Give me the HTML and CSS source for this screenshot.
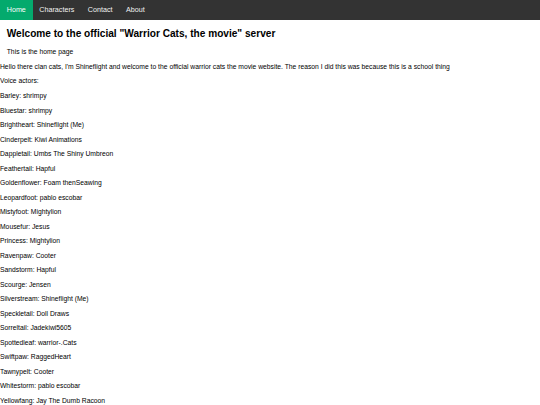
FILE: index.html
```html
<!DOCTYPE html>
<html>
<head>
<meta charset="utf-8">
<title>Warrior Cats</title>
<link rel="stylesheet" href="styles.css">
</head>
<body>
<nav class="topnav">
  <a class="active" href="#home">Home</a>
  <a href="#characters">Characters</a>
  <a href="#contact">Contact</a>
  <a href="#about">About</a>
</nav>
<div class="intro">
  <h2>Welcome to the official "Warrior Cats, the movie" server</h2>
  <p>This is the home page</p>
</div>
<p>Hello there clan cats, I'm Shineflight and welcome to the official warrior cats the movie website. The reason I did this was because this is a school thing</p>
<p>Voice actors:</p>
<p>Barley: shrimpy</p>
<p>Bluestar: shrimpy</p>
<p>Brightheart: Shineflight (Me)</p>
<p>Cinderpelt: Kiwi Animations</p>
<p>Dappletail: Umbs The Shiny Umbreon</p>
<p>Feathertail: Hapful</p>
<p>Goldenflower: Foam thenSeawing</p>
<p>Leopardfoot: pablo escobar</p>
<p>Mistyfoot: Mightylion</p>
<p>Mousefur: Jesus</p>
<p>Princess: Mightylion</p>
<p>Ravenpaw: Cooter</p>
<p>Sandstorm: Hapful</p>
<p>Scourge: Jensen</p>
<p>Silverstream: Shineflight (Me)</p>
<p>Speckletail: Doll Draws</p>
<p>Sorreltail: Jadekiwi5605</p>
<p>Spottedleaf: warrior-.Cats</p>
<p>Swiftpaw: RaggedHeart</p>
<p>Tawnypelt: Cooter</p>
<p>Whitestorm: pablo escobar</p>
<p>Yellowfang: Jay The Dumb Racoon</p>
</body>
</html>
```
FILE: styles.css
```css
body {
  margin: 0;
  font-family: "Liberation Sans", Arial, sans-serif;
  font-size: 6.75px;
  line-height: 7.77px;
  color: #000;
}

.topnav {
  display: flex;
  background-color: #333;
}

.topnav a {
  color: #f2f2f2;
  text-align: center;
  padding: 5.906px 6.75px;
  text-decoration: none;
  font-size: 7.172px;
  line-height: 8.25px;
}

.topnav a.active {
  background-color: #04AA6D;
  color: #fff;
}

.intro {
  padding-left: 6.75px;
}

h2 {
  font-size: 10.125px;
  line-height: 11.64px;
  margin: 8.4px 0;
  font-weight: bold;
}

p {
  margin: 6.75px 0;
}
```
